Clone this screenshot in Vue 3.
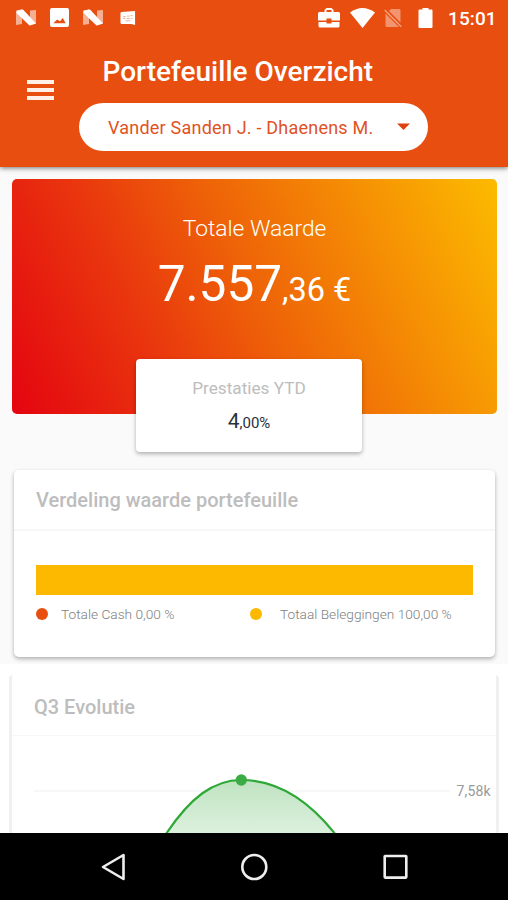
<template>
    <div class="screen">
        <header class="header">
            <div class="statusBar">
                <svg v-for="n in 2" :key="n" class="nIcon" :class="{ second: n == 2 }" viewBox="0 0 20 17">
                    <path d="M0 2.500 6 0V15L0 16zM20 14.500 14 16.500V1.500L20 1z" fill="#fff" opacity=".55" />
                    <path d="M.5 1.500 7 .5 20 14.500 13.500 16.500 .5 4z" fill="#fff" />
                </svg>
                <svg class="photoIcon" viewBox="0 0 20 20">
                    <path fill="#fff" fill-rule="evenodd" d="M2 0H18Q20 0 20 2V18Q20 20 18 20H2Q0 20 0 18V2Q0 0 2 0zM3.500 16H16.500L13.500 10.500 10.500 14 7.500 12z" />
                </svg>
                <svg class="tagIcon" viewBox="0 0 17 16">
                    <path fill="#fff" d="M1.500 1.500 16 .5V15.500L12 14.500H1.500Q.5 14 .5 13V3Q.5 2 1.500 1.500z" />
                    <path d="M3 6.500H6M7.500 6H10M11 5.500H13.500M3 8.500H5.500M7 8.500H10.500M12 8.500H13.500M6 11H11" stroke="#e84e0f" stroke-width=".8" opacity=".6" fill="none" />
                </svg>
                <div class="spacer"></div>
                <svg class="caseIcon" viewBox="0 0 22 20">
                    <path fill="#fff" fill-rule="evenodd" d="M6.500 4V2L8.500 0H13.500L15.500 2V4H20.500Q22 4 22 5.500V12.500H13.500V10.500H8.500V12.500H0V5.500Q0 4 1.500 4zM8.500 4H13.500V2H8.500z" />
                    <path fill="#fff" d="M.5 14H8.500V15.500H13.500V14H21.500V18Q21.500 19.500 20 19.500H2Q.5 19.500 .5 18z" />
                </svg>
                <svg class="wifiIcon" viewBox="0 0 25 20">
                    <path fill="#fff" d="M0 4.500Q12.500-4.500 25 4.500L12.500 20z" />
                </svg>
                <svg class="simIcon" viewBox="0 0 18 20">
                    <path fill="#fff" opacity=".4" d="M7 1H15Q16.500 1 16.500 2.500V14.500L5 3zM1.500 5.500 15 19H3Q1.500 19 1.500 17.500z" />
                    <path d="M.7 2 17.300 18.700" stroke="#fff" opacity=".5" stroke-width="1.300" />
                </svg>
                <svg class="batteryIcon" viewBox="0 0 15 20">
                    <path fill="#fff" d="M4.500 0H10.500V1.500H13.500Q14.500 1.500 14.500 2.500V19Q14.500 20 13.500 20H1.500Q.5 20 .5 19V2.500Q.5 1.500 1.500 1.500H4.500z" />
                </svg>
                <span class="clock">15:01</span>
            </div>
            <div class="toolbar">
                <button class="menuButton">
                    <span></span>
                    <span></span>
                    <span></span>
                </button>
                <div class="toolbarContent">
                    <h1>Portefeuille Overzicht</h1>
                    <div class="select">
                        <span>Vander Sanden J. - Dhaenens M.</span>
                        <svg class="caret" viewBox="0 0 13 7"><path d="M0 .5H13L6.500 7z" fill="#e0420f" /></svg>
                    </div>
                </div>
            </div>
        </header>

        <main class="content">
            <section class="total">
                <p class="totalLabel">Totale Waarde</p>
                <p class="totalValue">7.557<small>,36 €</small></p>
                <div class="ytd">
                    <p class="ytdLabel">Prestaties YTD</p>
                    <p class="ytdValue">4<small>,00%</small></p>
                </div>
            </section>

            <section class="card">
                <h2>Verdeling waarde portefeuille</h2>
                <div class="cardBody">
                    <div class="bar">
                        <div v-for="part in parts" :key="part.label" :style="{ width: part.percent + '%', background: part.color }"></div>
                    </div>
                    <div class="legend">
                        <div v-for="part in parts" :key="part.label" class="legendItem">
                            <i :style="{ background: part.color }"></i>
                            <span>{{ part.label }}</span>
                        </div>
                    </div>
                </div>
            </section>

            <div class="evolution">
                <section class="chartCard">
                    <h2>Q3 Evolutie</h2>
                    <svg class="chart" viewBox="0 0 484 98">
                        <defs>
                            <linearGradient id="area" x1="0" y1="0" x2="0" y2="1">
                                <stop offset="0" stop-color="#bfe3c1" />
                                <stop offset="1" stop-color="#ddf1de" />
                            </linearGradient>
                        </defs>
                        <path d="M22 55H438" stroke="#f4f4f4" stroke-width="1.500" />
                        <path :d="curve" fill="url(#area)" />
                        <path :d="curve" fill="none" stroke="#2ea836" stroke-width="2.200" />
                        <circle cx="229.300" cy="44" r="5.700" fill="#3bab43" />
                        <text x="444.500" y="59.500" textLength="34">7,58k</text>
                    </svg>
                </section>
            </div>
        </main>

        <nav class="navBar">
            <svg viewBox="0 0 28 30"><path d="M24.500 3V27L4 15z" /></svg>
            <svg viewBox="0 0 28 30"><circle cx="14.300" cy="15" r="12" /></svg>
            <svg viewBox="0 0 28 30"><rect x="3.700" y="4" width="21.600" height="21.600" rx=".5" /></svg>
        </nav>
    </div>
</template>

<script setup>
    const parts = [
        { label: "Totale Cash 0,00 %", percent: 0, color: "#e84e0f" },
        { label: "Totaal Beleggingen 100,00 %", percent: 100, color: "#fcb900" }
    ]
    const curve = "M154 98C178 62 201 44 229.300 44C264 44 295 62 324 99"
</script>

<style>
    body{
        margin: 0;
        background: white;
    }
</style>

<style scoped>
    .screen{
        width: 508px;
        height: 900px;
        display: flex;
        flex-direction: column;
        overflow: hidden;
        font-family: Roboto, "Liberation Sans", sans-serif;
        background-color: #fafafa;
    }
    h1, h2, p{
        margin: 0;
        white-space: nowrap;
    }
    svg{
        display: block;
        flex: none;
    }
    .header{
        height: 167px;
        flex: none;
        background-color: #e84e0f;
        box-shadow: 0 1px 5px rgba(0,0,0,0.55);
        z-index: 1;
    }
    .statusBar{
        height: 36px;
        display: flex;
        align-items: center;
        padding: 0 11px 0 16px;
    }
    .nIcon{
        width: 20px;
        height: 17px;
        margin-top: -1px;
    }
    .photoIcon{
        width: 19px;
        height: 19px;
        margin-left: 14px;
        margin-top: -1px;
        order: 1;
    }
    .nIcon.second{
        order: 2;
        margin-left: 14px;
    }
    .tagIcon{
        width: 16px;
        height: 16px;
        margin-left: 17px;
        margin-top: -1px;
        order: 3;
    }
    .spacer{
        flex: 1;
        order: 4;
    }
    .caseIcon, .wifiIcon, .simIcon, .batteryIcon, .clock{
        order: 5;
    }
    .caseIcon{
        width: 22px;
        height: 20px;
        margin-top: -1px;
    }
    .wifiIcon{
        width: 25px;
        height: 20px;
        margin-left: 10px;
        margin-top: -1px;
    }
    .simIcon{
        width: 18px;
        height: 20px;
        margin-left: 9px;
        margin-top: -1px;
    }
    .batteryIcon{
        width: 15px;
        height: 20px;
        margin-left: 16px;
    }
    .clock{
        width: 49px;
        margin-left: 15px;
        color: white;
        font-size: 19px;
        font-weight: 500;
        letter-spacing: 0.1px;
    }
    .toolbar{
        display: flex;
    }
    .menuButton{
        width: 27px;
        margin: 44px 25px 0 27px;
        padding: 0;
        border: none;
        background: none;
        display: flex;
        flex-direction: column;
        gap: 4px;
        height: 20px;
    }
    .menuButton span{
        height: 4px;
        width: 27px;
        background-color: #fff0e8;
    }
    .toolbarContent{
        width: 349px;
    }
    h1{
        height: 67px;
        line-height: 72px;
        padding-left: 23.5px;
        color: white;
        font-size: 28px;
        font-weight: 500;
    }
    .select{
        height: 48px;
        box-sizing: border-box;
        border-radius: 24px;
        background-color: white;
        color: #e0521f;
        display: flex;
        align-items: center;
        justify-content: space-between;
        padding: 0 18px 0 29px;
        font-size: 18px;
        letter-spacing: 0.22px;
        white-space: nowrap;
    }
    .caret{
        width: 13px;
        height: 7px;
        margin-top: -2px;
    }
    .content{
        flex: 1;
        min-height: 0;
        overflow: hidden;
    }
    .total{
        height: 235px;
        margin: 12px 11px 0 12px;
        border-radius: 5px;
        background: linear-gradient(65deg, #e40410 0%, #e9350e 28%, #ee6208 50%, #f58d04 74%, #fcbb00 100%);
        color: white;
        display: flex;
        flex-direction: column;
        align-items: center;
    }
    .totalLabel{
        flex: none;
        margin-top: 36px;
        height: 29px;
        line-height: 28px;
        font-size: 22.8px;
        font-weight: 300;
    }
    .totalValue{
        flex: none;
        height: 60px;
        line-height: 60px;
        margin-top: 9px;
        padding-top: 1px;
        font-size: 49.5px;
    }
    .totalValue small{
        font-size: 32.5px;
    }
    .ytd{
        width: 226px;
        height: 93px;
        flex: none;
        margin: 45px 11px 0 0;
        border-radius: 4px;
        background-color: white;
        box-shadow: 0 2px 4px rgba(0,0,0,0.3);
        text-align: center;
    }
    .ytdLabel{
        margin-top: 17px;
        line-height: 24px;
        font-size: 17.2px;
        color: #bdbdbd;
    }
    .ytdValue{
        margin-top: 8px;
        line-height: 26px;
        font-size: 21px;
        color: #26323e;
    }
    .ytdValue small{
        font-size: 15px;
    }
    .card{
        height: 187px;
        margin: 56px 13px 0 14px;
        border-radius: 5px;
        background-color: white;
        box-shadow: 0 2px 4px rgba(0,0,0,0.3);
    }
    h2{
        height: 59px;
        line-height: 61px;
        padding-left: 22px;
        border-bottom: 2px solid #f7f7f7;
        font-size: 20px;
        font-weight: 500;
        color: #bdbdbd;
    }
    .cardBody{
        padding: 34px 22px 0;
    }
    .bar{
        height: 30px;
        display: flex;
    }
    .legend{
        display: grid;
        grid-template-columns: 214px 1fr;
        margin-top: 9px;
    }
    .legendItem{
        display: flex;
        align-items: center;
        height: 20px;
        gap: 13px;
        font-size: 13.7px;
        font-weight: 300;
        color: #808080;
        white-space: nowrap;
    }
    .legendItem:last-child{
        gap: 18px;
    }
    .legendItem i{
        width: 12px;
        height: 12px;
        border-radius: 50%;
    }
    .evolution{
        margin-top: 7px;
        padding: 11px 9px 0;
        background-color: white;
    }
    .chartCard{
        border: solid #f0f0f0;
        border-width: 0 3px;
        border-radius: 4px;
    }
    .chartCard h2{
        height: 60px;
        line-height: 65px;
        border-width: 1px;
    }
    .chart{
        width: 484px;
        height: 98px;
    }
    .chart text{
        font-size: 14px;
        fill: #999;
    }
    .navBar{
        height: 67px;
        flex: none;
        background-color: black;
        display: flex;
        justify-content: center;
        align-items: center;
        gap: 113px;
    }
    .navBar svg{
        width: 28px;
        height: 30px;
        fill: none;
        stroke: #eee;
        stroke-width: 2.6;
        stroke-linejoin: round;
    }
</style>
